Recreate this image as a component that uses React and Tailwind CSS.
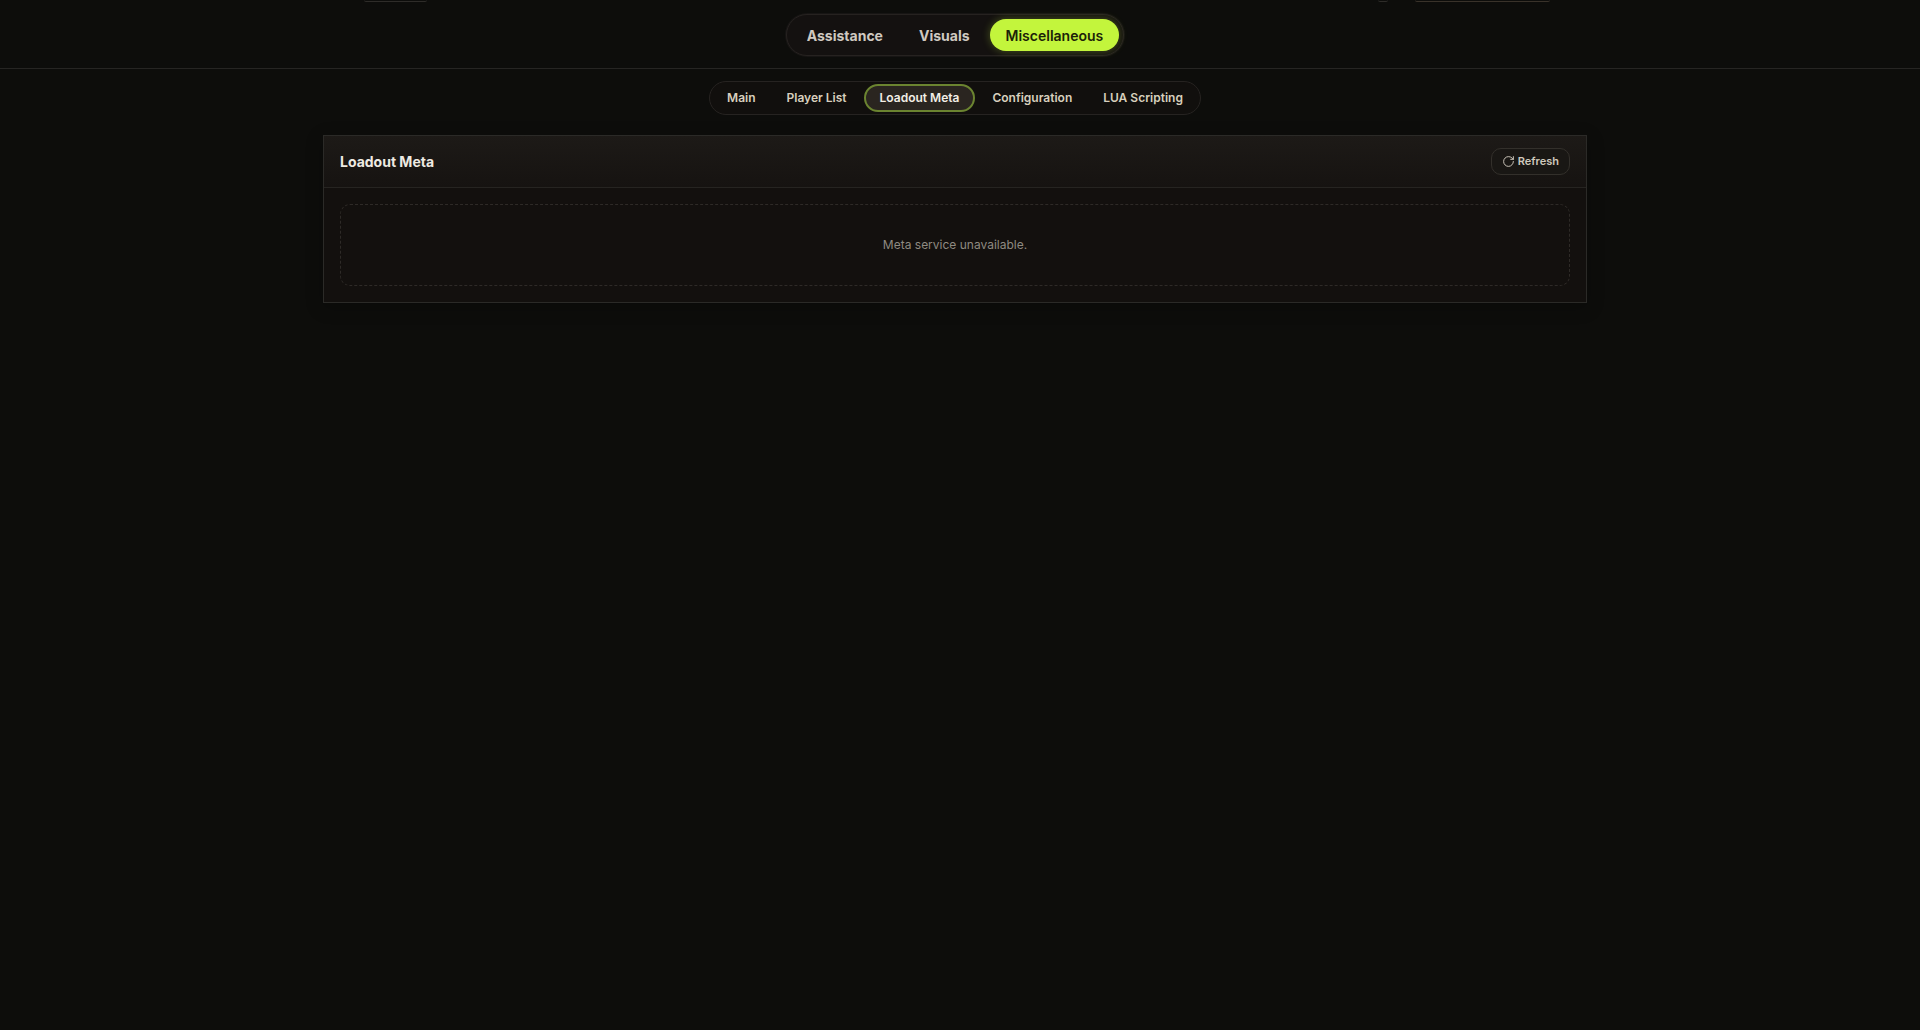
import React from 'react';
import { RotateCw } from 'lucide-react';

const topTabs = ['Assistance', 'Visuals', 'Miscellaneous'];
const subTabs = ['Main', 'Player List', 'Loadout Meta', 'Configuration', 'LUA Scripting'];

export default function App() {
  return (
    <div className="min-h-[1030px] bg-[#0d0d0b] font-['Inter',sans-serif] overflow-hidden">
      <header className="h-[69px] border-b border-[#262523]">
        {/* what is left of the scrolled-away top row */}
        <div className="h-[2px] flex overflow-hidden">
          <div className="ml-[364px] w-[63px] h-[2px] rounded-b-md border-b border-[#2e2c29]" />
          <div className="ml-[951px] w-[10px] h-[2px] rounded-b-md border-b border-[#2e2c29]" />
          <div className="ml-[27px] w-[135px] h-[2px] rounded-b-md border-b border-[#39322a]" />
        </div>
        <div className="w-[1910px] flex justify-center pt-[12px]">
          <nav className="flex items-center gap-1 h-[42px] rounded-full border border-[#262220] bg-[#141110] p-1 shadow-[0_0_0_1px_#171514]">
            {topTabs.map((tab) =>
              tab === 'Miscellaneous' ? (
                <button key={tab} className="h-8 px-4 rounded-full bg-[#c3f53c] text-[#1c2208] text-[14px] font-semibold shadow-[0_0_8px_rgba(195,245,60,0.3)]">
                  {tab}
                </button>
              ) : (
                <button key={tab} className="h-8 px-4 rounded-full text-[#cfc9c0] text-[14px] font-bold">
                  {tab}
                </button>
              )
            )}
          </nav>
        </div>
      </header>

      <div className="w-[1910px]">
        <div className="flex justify-center pt-3">
          <nav className="flex items-center gap-[3px] h-[34px] px-[3px] rounded-full border border-[#262321] bg-[#110f0d]">
            {subTabs.map((tab) =>
              tab === 'Loadout Meta' ? (
                <button key={tab} className="h-7 px-[14px] rounded-full border-2 border-[#6b8430] bg-[#2a2520] text-[#f2eee6] text-[12px] font-semibold">
                  {tab}
                </button>
              ) : (
                <button key={tab} className="h-7 px-[14px] rounded-full text-[#d8cfbd] text-[12px] font-semibold">
                  {tab}
                </button>
              )
            )}
          </nav>
        </div>

        <section className="w-[1264px] mx-auto mt-5 border border-[#2b2a27] bg-[#13100e] shadow-[0_4px_16px_rgba(0,0,0,0.25)]">
          <div className="flex items-center justify-between h-[52px] px-4 border-b border-[#262421] bg-gradient-to-b from-[#1d1a17] to-[#161311]">
            <h2 className="text-[14px] font-bold text-[#eeeae2]">Loadout Meta</h2>
            <button className="flex items-center gap-[3px] h-[27px] px-[10px] rounded-[10px] border border-[#33302b] bg-[#191714] text-[#cfc9bd] text-[11px] font-semibold">
              <RotateCw size={13} strokeWidth={1.75} />
              Refresh
            </button>
          </div>
          <div className="p-4">
            <div className="flex items-center justify-center h-[82px] rounded-[10px] border border-dashed border-[#2e2a27] text-[12px] text-[#8f8a81]">
              Meta service unavailable.
            </div>
          </div>
        </section>
      </div>
    </div>
  );
}
